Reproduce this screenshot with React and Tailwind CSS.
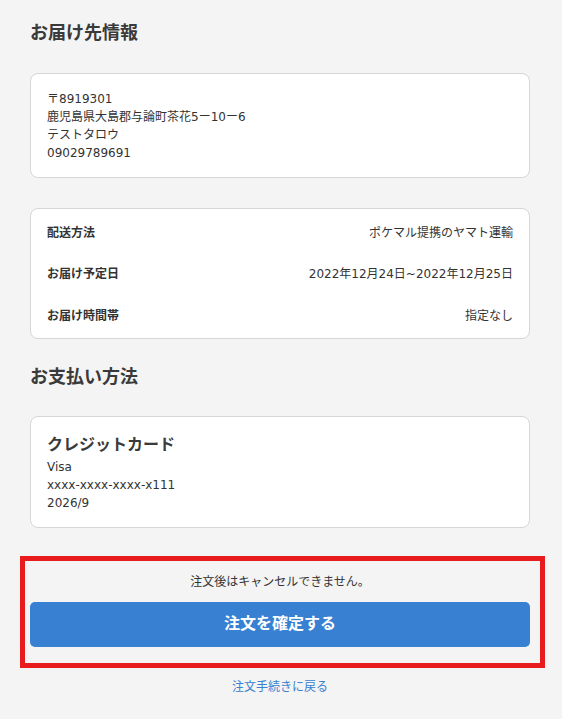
import React from "react";

const font = { fontFamily: '"DejaVu Sans", "Noto Sans CJK JP", "Noto Sans", sans-serif' };

const deliveryRows = [
  { label: "配送方法", value: "ポケマル提携のヤマト運輸" },
  { label: "お届け予定日", value: "2022年12月24日~2022年12月25日" },
  { label: "お届け時間帯", value: "指定なし" },
];

const App = () => {
  return (
    <div
      className="min-h-[719px] bg-[#f4f4f4] pl-[30px] pr-[32px] pt-[21px] pb-[20px] text-[#333333]"
      style={font}
    >
      <h2 className="text-[18px] leading-[24px] font-bold text-[#3a3a3a]">お届け先情報</h2>

      <div className="mt-[28px] rounded-[8px] border border-[#d6d6d6] bg-white px-[16px] pt-[16px] pb-[15px] text-[12px] leading-[18px]">
        <p>〒8919301</p>
        <p>鹿児島県大島郡与論町茶花5ー10ー6</p>
        <p>テストタロウ</p>
        <p>09029789691</p>
      </div>

      <div className="mt-[30px] rounded-[8px] border border-[#d6d6d6] bg-white px-[16px] pt-[3px] pb-[1px]">
        {deliveryRows.map((row) => (
          <div key={row.label} className="flex h-[41.5px] items-center justify-between text-[12px]">
            <span className="font-bold">{row.label}</span>
            <span>{row.value}</span>
          </div>
        ))}
      </div>

      <h2 className="mt-[26px] text-[18px] leading-[24px] font-bold text-[#3a3a3a]">お支払い方法</h2>

      <div className="mt-[27px] rounded-[8px] border border-[#d6d6d6] bg-white px-[16px] pt-[17px] pb-[15px] text-[12px] leading-[18px]">
        <p className="mb-[2px] text-[16px] leading-[22px] font-bold text-[#3a3a3a]">クレジットカード</p>
        <p>Visa</p>
        <p>xxxx-xxxx-xxxx-x111</p>
        <p>2026/9</p>
      </div>

      <div className="mt-[28px] ml-[-10px] mr-[-15px] border-[5px] border-[#e81c1c] pl-[5px] pr-[10px] pt-[12px] pb-[16px]">
        <p className="text-center text-[12px] leading-[18px]">注文後はキャンセルできません。</p>
        <button className="mt-[11px] flex h-[45px] w-full items-center justify-center rounded-[5px] bg-[#3780d2] text-[16px] font-bold text-white">
          注文を確定する
        </button>
      </div>

      <p className="mt-[10px] text-center text-[12px] leading-[18px] text-[#3780d2]">注文手続きに戻る</p>
    </div>
  );
};

export default App;
